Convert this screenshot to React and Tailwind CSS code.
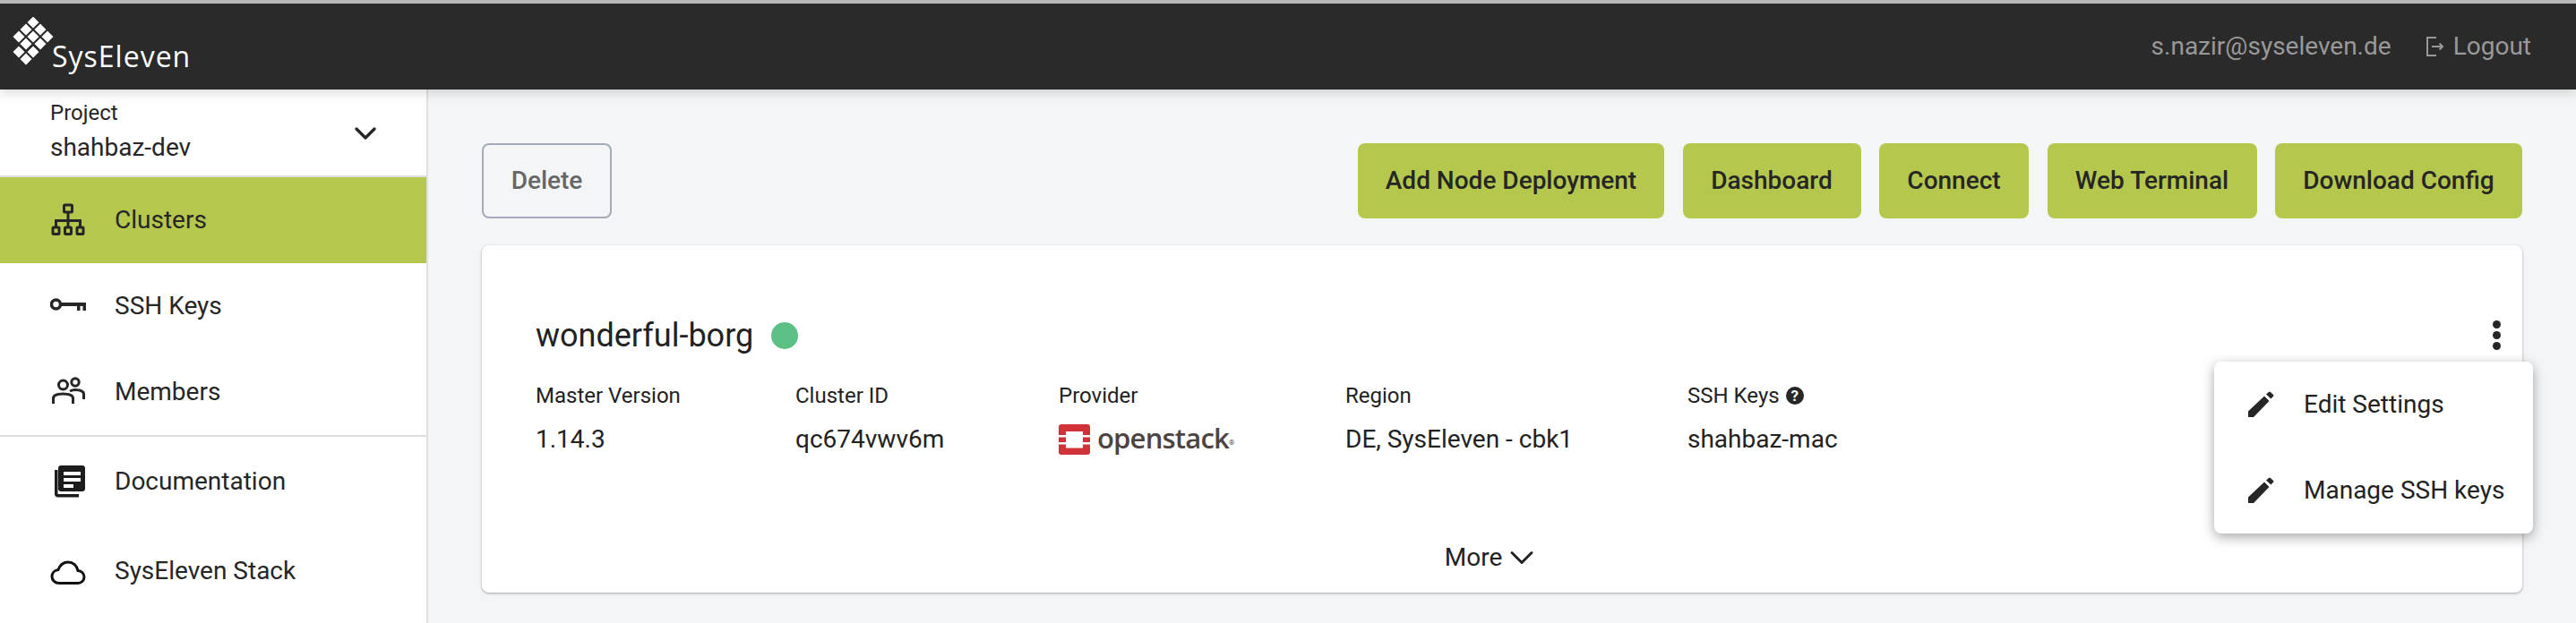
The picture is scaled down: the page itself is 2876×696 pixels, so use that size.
import { ChevronDown } from "lucide-react";

const Logo = () => {
  const cells = [
    [25, 6], [17, 14], [33, 14], [9, 22], [25, 22], [41, 22],
    [17, 30], [33, 30], [9, 39], [25, 39], [17, 47],
  ];
  return (
    <svg width="50" height="56" viewBox="0 0 50 56" className="shrink-0" fill="#fff">
      {cells.map(([x, y]) => (
        <polygon key={`${x}-${y}`} points={`${x},${y - 6.5} ${x + 6.5},${y} ${x},${y + 6.5} ${x - 6.5},${y}`} />
      ))}
    </svg>
  );
};

const ClusterIcon = () => (
  <svg width="40" height="40" viewBox="0 0 40 40" fill="none" stroke="#262626" strokeWidth="3">
    <rect x="15.5" y="3" width="9" height="8" rx="1" />
    <rect x="3" y="28" width="7" height="7.5" rx="1" />
    <rect x="16.5" y="28" width="7" height="7.5" rx="1" />
    <rect x="30" y="28" width="7" height="7.5" rx="1" />
    <path d="M20 11v17M6.5 28v-7.5h27V28" />
  </svg>
);

const KeyIcon = () => (
  <svg width="40" height="40" viewBox="0 0 40 40" fill="#262626">
    <circle cx="6.500" cy="18" r="5" fill="none" stroke="#262626" strokeWidth="3.500" />
    <path d="M12 16h28v9h-3.500v-5h-3v5H30v-5H12z" />
  </svg>
);

const MembersIcon = () => (
  <svg width="40" height="40" viewBox="0 0 40 40" fill="none" stroke="#262626" strokeWidth="3">
    <circle cx="14.500" cy="12" r="5" />
    <circle cx="28" cy="9" r="4.200" />
    <path d="M3.500 33v-6c0-3 3-5 11-5s11 2 11 5v6" />
    <path d="M22 19c2-1 4-1.500 6-1.500 6 0 9.500 2 9.500 5V28" />
  </svg>
);

const DocsIcon = () => (
  <svg width="40" height="40" viewBox="0 0 40 40" fill="#1d1d1d">
    <path d="M8.500 7h-3.500v27c0 2 1.500 3.500 3.500 3.500H32v-3.500H8.500z" />
    <path fillRule="evenodd" d="M12 2h24c1.700 0 3 1.300 3 3v23c0 1.700-1.300 3-3 3H12c-1.700 0-3-1.300-3-3V5c0-1.700 1.300-3 3-3zm3 7v4h19V9zm0 7v4h19v-4zm0 7v4h11v-4z" />
  </svg>
);

const CloudIcon = () => (
  <svg width="40" height="40" viewBox="0 0 40 40" fill="none" stroke="#111" strokeWidth="3">
    <path d="M10 33.500c-4.500 0-8-3.200-8-7.500 0-4 3-7 7-7.500C11 13.500 15 10 20 10c5.500 0 10 3.700 11 9.500 4 .3 7 3.300 7 7 0 4-3.200 7-7 7z" />
  </svg>
);

const PencilIcon = () => (
  <svg width="30" height="30" viewBox="0 0 30 30" fill="#262626" className="shrink-0">
    <path d="M1 22.500 19 5.500l5.500 5.500L7 29H1z" />
    <path d="M21 3.500 24 1c.6-.5 1.400-.5 2 0l3 3c.5.600.5 1.300 0 1.800l-2.600 2.700z" />
  </svg>
);

const LogoutIcon = () => (
  <svg width="20" height="22" viewBox="0 0 20 22" fill="none" stroke="#999" strokeWidth="2" className="shrink-0">
    <path d="M11 1H1v20h10M6 11h12M14.500 7.500 18 11l-3.500 3.500" />
  </svg>
);

const OpenstackMark = () => (
  <svg width="35" height="34" viewBox="0 0 35 34" className="shrink-0">
    <rect width="35" height="34" rx="3" fill="#cf3339" />
    <rect x="8" y="8" width="19" height="18.500" fill="#fff" />
    <path d="M0 12h8v2.500H0zM0 20h8v2.500H0zM27 12h8v2.500h-8zM27 20h8v2.500h-8z" fill="#fff" />
  </svg>
);

const navTop = [
  { label: "Clusters", icon: <ClusterIcon />, active: true, height: "h-[96px]" },
  { label: "SSH Keys", icon: <KeyIcon />, height: "h-[96px]" },
  { label: "Members", icon: <MembersIcon />, height: "h-[96px]" },
];

const navBottom = [
  { label: "Documentation", icon: <DocsIcon />, height: "h-[100px]" },
  { label: "SysEleven Stack", icon: <CloudIcon />, height: "h-[100px]" },
];

const NavItem = ({ label, icon, active, height }) => (
  <div className={`flex items-center pl-[56px] text-[28px] text-[#262626] ${height} ${active ? "bg-[#b5c84d]" : ""}`}>
    <span className="w-[72px] shrink-0">{icon}</span>
    {label}
  </div>
);

const actions = [
  { name: "Add Node Deployment", width: "w-[342px]" },
  { name: "Dashboard", width: "w-[199px]" },
  { name: "Connect", width: "w-[167px]" },
  { name: "Web Terminal", width: "w-[234px]" },
  { name: "Download Config", width: "w-[276px]" },
];

const Field = ({ label, width, children }) => (
  <div className={`flex flex-col shrink-0 ${width}`}>
    <div className="flex items-center gap-[7px] h-[30px] text-[24px] leading-[30px] text-[#222]">{label}</div>
    <div className="flex items-center mt-[16px] h-[36px] text-[28px] text-[#222]">{children}</div>
  </div>
);

export default function App() {
  return (
    <div className="relative w-[2876px] h-[696px] overflow-hidden bg-[#f4f5f7] font-['Roboto',sans-serif]">
      <header className="relative z-10 flex items-center justify-between h-[100px] border-t-[4px] border-[#b9b9b9] bg-[#2a2a2a] pl-3 pr-[50px] shadow-[0_4px_12px_rgba(0,0,0,0.15)]">
        <div className="flex items-start">
          <Logo />
          <span className="-ml-1 mt-[22px] text-[32px] font-medium leading-[44px] tracking-[1px] text-white font-['Open_Sans',sans-serif]">SysEleven</span>
        </div>
        <div className="flex items-center text-[28px] text-[#999]">
          <span>s.nazir@syseleven.de</span>
          <span className="ml-[39px] mr-[10px]"><LogoutIcon /></span>
          <span>Logout</span>
        </div>
      </header>

      <div className="flex h-[596px]">
        <aside className="w-[478px] shrink-0 border-r-[2px] border-[#e0e0e0] bg-white">
          <div className="flex items-center justify-between h-[98px] border-b-[2px] border-[#dedede] pl-[56px] pr-[48px]">
            <div className="flex flex-col pb-[2px]">
              <span className="mb-[2px] text-[24px] leading-[34px] text-[#262626]">Project</span>
              <span className="text-[28px] leading-[40px] text-[#262626]">shahbaz-dev</span>
            </div>
            <ChevronDown size={40} strokeWidth={2} color="#262626" className="mt-[2px]" />
          </div>
          {navTop.map((item) => (
            <NavItem key={item.label} {...item} />
          ))}
          <div className="h-[2px] bg-[#dedede]" />
          {navBottom.map((item) => (
            <NavItem key={item.label} {...item} />
          ))}
        </aside>

        <main className="flex-1 px-[60px] pt-[60px]">
          <div className="flex items-center justify-between">
            <button className="h-[84px] w-[145px] rounded-[8px] border-[2px] border-[#a3abb8] text-[28px] font-medium text-[#666]">Delete</button>
            <div className="flex gap-[20.500px]">
              {actions.map(({ name, width }) => (
                <button key={name} className={`h-[84px] rounded-[8px] bg-[#b5c84d] text-[28px] font-medium text-[#262626] ${width}`}>{name}</button>
              ))}
            </div>
          </div>

          <section className="mt-[30px] h-[388px] rounded-[8px] bg-white px-[60px] shadow-[0_1px_3px_rgba(0,0,0,0.35)]">
            <div className="flex items-center justify-between pt-[76px]">
              <div className="flex items-center gap-[20px] h-[50px]">
                <h2 className="text-[36px] text-[#222]">wonderful-borg</h2>
                <span className="h-[30px] w-[30px] rounded-full bg-[#5cc084]" />
              </div>
              <div className="flex flex-col gap-[3px] -mr-[36px] -mt-[2px]">
                <span className="h-[9px] w-[9px] rounded-full bg-[#262626]" />
                <span className="h-[9px] w-[9px] rounded-full bg-[#262626]" />
                <span className="h-[9px] w-[9px] rounded-full bg-[#262626]" />
              </div>
            </div>
            <div className="flex mt-[27px]">
              <Field label="Master Version" width="w-[290px]">1.14.3</Field>
              <Field label="Cluster ID" width="w-[294px]">qc674vwv6m</Field>
              <Field label="Provider" width="w-[320px]">
                <div className="flex items-center gap-2">
                  <OpenstackMark />
                  <span className="-mt-[5px] text-[31px] font-semibold leading-[36px] tracking-[-0.8px] text-[#4d4442] font-['Open_Sans',sans-serif]">openstack</span>
                  <span className="-ml-2 mt-2 text-[8px] text-[#4d4442]">®</span>
                </div>
              </Field>
              <Field label="Region" width="w-[382px]">DE, SysEleven - cbk1</Field>
              <Field
                label={
                  <>
                    SSH Keys
                    <span className="flex h-[20px] w-[20px] items-center justify-center rounded-full bg-[#262626] text-[17px] font-bold leading-none text-white">?</span>
                  </>
                }
                width="w-[300px]"
              >
                shahbaz-mac
              </Field>
            </div>
            <div className="flex items-center justify-center mt-[92px] pr-[20px] text-[28px] text-[#222]">
              More
              <ChevronDown size={44} strokeWidth={1.6} />
            </div>
          </section>
        </main>
      </div>

      {/* open menu from the card's three dots */}
      <div className="absolute left-[2472px] top-[404px] z-20 w-[356px] rounded-[8px] bg-white shadow-[0_4px_14px_rgba(0,0,0,0.35)]">
        {["Edit Settings", "Manage SSH keys"].map((name) => (
          <div key={name} className="flex h-[96px] items-center pl-[37px] text-[28px] text-[#222]">
            <PencilIcon />
            <span className="ml-[33px]">{name}</span>
          </div>
        ))}
      </div>
    </div>
  );
}
